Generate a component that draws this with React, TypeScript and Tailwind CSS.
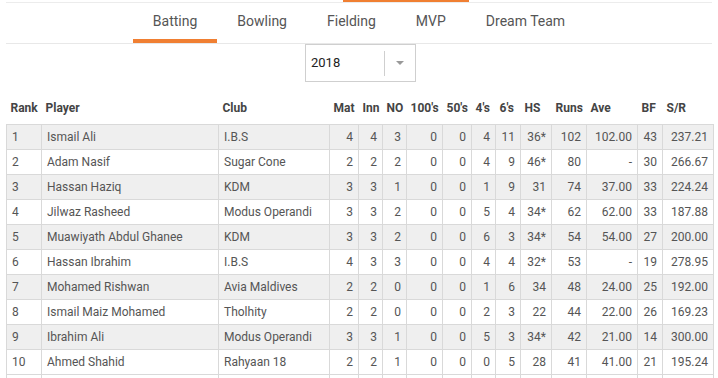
import React from "react";

const cols = [35, 177, 111, 29, 24, 24, 36, 29, 24, 25, 31, 35, 51, 25, 51];
const heads = ["Rank", "Player", "Club", "Mat", "Inn", "NO", "100's", "50's", "4's", "6's", "HS", "Runs", "Ave", "BF", "S/R"];

const rows: string[][] = [
  ["1", "Ismail Ali", "I.B.S", "4", "4", "3", "0", "0", "4", "11", "36*", "102", "102.00", "43", "237.21"],
  ["2", "Adam Nasif", "Sugar Cone", "2", "2", "2", "0", "0", "4", "9", "46*", "80", "-", "30", "266.67"],
  ["3", "Hassan Haziq", "KDM", "3", "3", "1", "0", "0", "1", "9", "31", "74", "37.00", "33", "224.24"],
  ["4", "Jilwaz Rasheed", "Modus Operandi", "3", "3", "2", "0", "0", "5", "4", "34*", "62", "62.00", "33", "187.88"],
  ["5", "Muawiyath Abdul Ghanee", "KDM", "3", "3", "2", "0", "0", "6", "3", "34*", "54", "54.00", "27", "200.00"],
  ["6", "Hassan Ibrahim", "I.B.S", "4", "3", "3", "0", "0", "4", "4", "32*", "53", "-", "19", "278.95"],
  ["7", "Mohamed Rishwan", "Avia Maldives", "2", "2", "0", "0", "0", "1", "6", "34", "48", "24.00", "25", "192.00"],
  ["8", "Ismail Maiz Mohamed", "Tholhity", "2", "2", "0", "0", "0", "2", "3", "22", "44", "22.00", "26", "169.23"],
  ["9", "Ibrahim Ali", "Modus Operandi", "3", "3", "1", "0", "0", "5", "3", "34*", "42", "21.00", "14", "300.00"],
  ["10", "Ahmed Shahid", "Rahyaan 18", "2", "2", "1", "0", "0", "0", "5", "28", "41", "41.00", "21", "195.24"],
  ["", "", "", "", "", "", "", "", "", "", "", "", "", "", ""],
];

const tabs = ["Batting", "Bowling", "Fielding", "MVP", "Dream Team"];

export default function App() {
  return (
    <div className="w-[718px] h-[378px] overflow-hidden bg-white font-['Roboto',sans-serif]">
      <div className="h-[2px] flex">
        <div className="ml-[343px] w-[126px] h-[2px] bg-[#f07f32]" />
      </div>
      <div className="mx-[6px] h-px bg-[#ececec]" />
      <div className="mx-[6px] flex justify-center border-b border-[#e8e8e8]">
        {tabs.map((t, i) => (
          <div
            key={t}
            className="relative h-[40px] px-5 pb-[4px] flex items-center text-[14px] text-[#555]"
          >
            {t}
            {i === 0 && <div className="absolute left-0 right-0 bottom-0 h-[4px] bg-[#f07f32]" />}
          </div>
        ))}
      </div>
      <div className="flex justify-center pl-[3px]">
        <div className="w-[111px] h-[38px] border border-[#cfcfcf] flex items-center">
          <div className="flex-1 pl-[5px] text-[13px] text-[#222]">2018</div>
          <div className="w-px h-[25px] bg-[#cfcfcf]" />
          <div className="w-[30px] flex justify-center">
            <svg width="8" height="5" viewBox="0 0 8 5">
              <path d="M0 0 L8 0 L4 4 Z" fill="#999" />
            </svg>
          </div>
        </div>
      </div>
      <table className="ml-[6px] w-[707px] table-fixed border-collapse text-[12px]">
        <colgroup>
          {cols.map((w, i) => (
            <col key={i} style={{ width: w }} />
          ))}
        </colgroup>
        <thead>
          <tr className="h-[42px]">
            {heads.map((h) => (
              <th key={h} className="align-bottom pb-[7px] px-[4px] text-left font-bold text-[#444] whitespace-nowrap">
                {h}
              </th>
            ))}
          </tr>
        </thead>
        <tbody>
          {rows.map((r, ri) => (
            <tr key={ri} className={`h-[25px] ${ri % 2 === 0 && ri < 10 ? "bg-[#efefef]" : "bg-white"}`}>
              {r.map((c, ci) => (
                <td
                  key={ci}
                  className={`border border-[#d9d9d9] px-[5px] py-0 text-[#555] whitespace-nowrap overflow-hidden ${
                    ci < 3 ? "text-left" : "text-right"
                  }`}
                >
                  {c}
                </td>
              ))}
            </tr>
          ))}
        </tbody>
      </table>
    </div>
  );
}
